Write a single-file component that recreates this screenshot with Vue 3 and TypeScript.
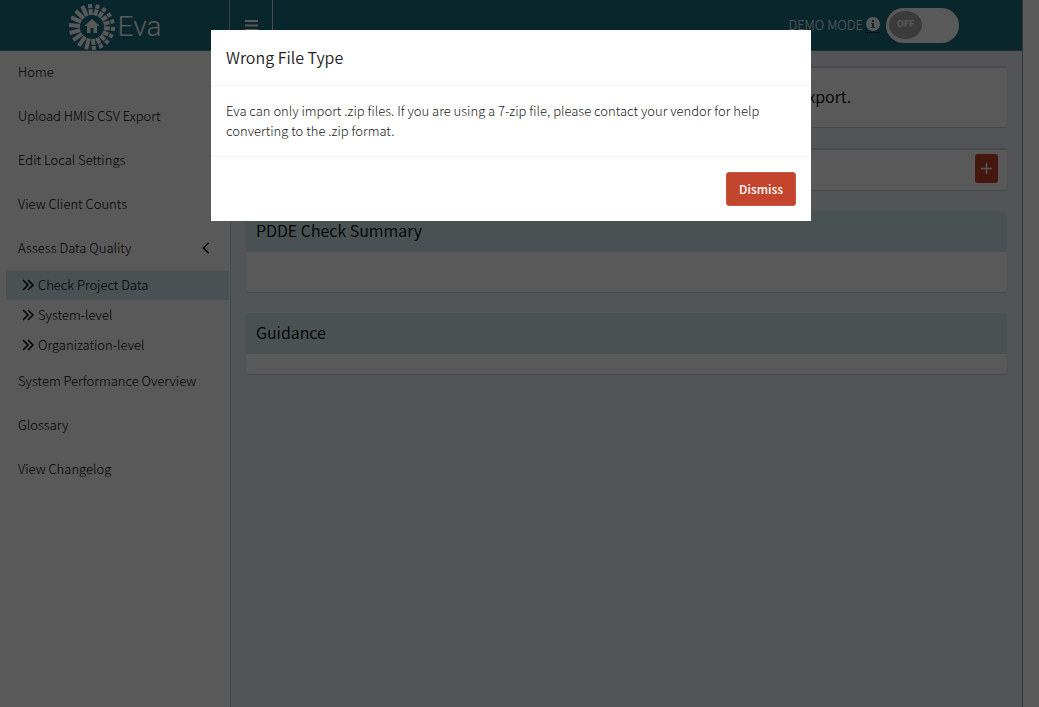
<script setup lang="ts">
import { ref } from 'vue'

interface NavItem {
  label: string
  children?: string[]
}

const nav: NavItem[] = [
  { label: 'Home' },
  { label: 'Upload HMIS CSV Export' },
  { label: 'Edit Local Settings' },
  { label: 'View Client Counts' },
  { label: 'Assess Data Quality', children: ['Check Project Data', 'System-level', 'Organization-level'] },
  { label: 'System Performance Overview' },
  { label: 'Glossary' },
  { label: 'View Changelog' },
]

const active = ref('Check Project Data')
const demoMode = ref(false)
const dialogOpen = ref(true)

const solidRays = [195, 215, 235, 255, 275, 295, 315, 335]
const splitRays = [-5, 15, 35, 55, 75, 95, 115, 135, 155, 175]
</script>

<template>
  <div class="page">
    <div class="shell">
      <header class="topbar">
        <a class="brand" href="#" aria-label="Eva">
          <svg class="logo" viewBox="-24 -24 48 48" aria-hidden="true">
            <rect v-for="a in solidRays" :key="a" x="-2" y="-23" width="4" height="11" :transform="`rotate(${a})`" />
            <g v-for="a in splitRays" :key="'s' + a" :transform="`rotate(${a})`">
              <rect x="-2" y="-23" width="4" height="4" />
              <rect x="-2" y="-18" width="4" height="6" />
            </g>
            <path d="M0-8 7.5-1H5V6H1.5V1H-1.5V6H-5V-1H-7.5Z" />
          </svg>
          <span>Eva</span>
        </a>
        <button class="burger" type="button" aria-label="Toggle navigation">
          <svg viewBox="0 0 13 11" aria-hidden="true"><path d="M0 0h13v2H0zM0 4.5h13v2H0zM0 9h13v2H0z" /></svg>
        </button>
        <div class="demo">
          <label for="demo">DEMO MODE</label>
          <span class="info">
            <svg viewBox="0 0 14 14" aria-hidden="true">
              <circle cx="7" cy="7" r="7" />
              <path class="mark" d="M6 3h2v2H6zM5 6h3v4h1v1H5v-1h1V7H5z" />
            </svg>
          </span>
          <span class="switch">
            <input id="demo" v-model="demoMode" type="checkbox" />
            <span class="knob">{{ demoMode ? 'ON' : 'OFF' }}</span>
          </span>
        </div>
      </header>

      <div class="columns">
        <nav class="sidebar">
          <ul>
            <li v-for="item in nav" :key="item.label">
              <a class="item" href="#">
                <span>{{ item.label }}</span>
                <svg v-if="item.children" class="caret" viewBox="0 0 8 12" aria-hidden="true"><path d="M6.5 1 1.5 6l5 5" /></svg>
              </a>
              <ul v-if="item.children" class="sub">
                <li v-for="child in item.children" :key="child">
                  <a class="subitem" :class="{ active: child === active }" href="#" @click.prevent="active = child">
                    <svg class="chevrons" viewBox="0 0 12 12" aria-hidden="true"><path d="M1 1l5 5-5 5M6 1l5 5-5 5" /></svg>
                    <span>{{ child }}</span>
                  </a>
                </li>
              </ul>
            </li>
          </ul>
        </nav>

        <main class="content">
          <section class="box notice">
            <p>Please upload your hashed HMIS CSV files to view this export.</p>
          </section>
          <section class="box collapsed">
            <button class="expand" type="button" aria-label="Expand">
              <svg viewBox="0 0 11 11" aria-hidden="true"><path d="M5.5 0v11M0 5.5h11" /></svg>
            </button>
          </section>
          <section class="box titled">
            <h3>PDDE Check Summary</h3>
            <div class="body tall"></div>
          </section>
          <section class="box titled">
            <h3>Guidance</h3>
            <div class="body"></div>
          </section>
        </main>
      </div>
    </div>

    <div v-if="dialogOpen" class="backdrop">
      <div class="dialog" role="dialog" aria-modal="true" aria-labelledby="dialog-title">
        <h4 id="dialog-title">Wrong File Type</h4>
        <p>
          Eva can only import .zip files. If you are using a 7-zip file, please contact your vendor for help
          converting to the .zip format.
        </p>
        <footer>
          <button class="dismiss" type="button" @click="dialogOpen = false">Dismiss</button>
        </footer>
      </div>
    </div>
  </div>
</template>

<style>
body {
  margin: 0;
  background: #fff;
}
</style>

<style scoped>
* {
  box-sizing: border-box;
}
.page {
  min-height: 100vh;
  padding-right: 16px;
  font-family: "Noto Sans CJK SC", "Noto Sans", sans-serif;
  font-size: 13px;
  font-weight: 300;
  line-height: 20px;
  color: #000;
}
.shell {
  display: flex;
  flex-direction: column;
  min-height: 100vh;
  border-right: 1px solid #999;
}
ul {
  list-style: none;
  margin: 0;
  padding: 0;
}
a {
  color: inherit;
  text-decoration: none;
}
.topbar {
  display: flex;
  height: 51px;
  background: #1a6e80;
  border-bottom: 1px solid #5e8a96;
  color: #fff;
}
.brand {
  display: flex;
  align-items: center;
  justify-content: center;
  gap: 2px;
  width: 230px;
  padding-top: 3px;
  border-right: 1px solid #a9bfc5;
  font: 300 28px/50px Roboto, sans-serif;
}
.logo {
  width: 48px;
  height: 48px;
  fill: #fff;
}
.burger {
  display: flex;
  align-items: center;
  justify-content: center;
  width: 43px;
  padding: 0;
  border: 0;
  border-right: 1px solid #d5e0e3;
  background: none;
}
.burger svg {
  width: 13px;
  height: 11px;
  fill: #fff;
}
.demo {
  display: flex;
  align-items: center;
  gap: 3px;
  margin-left: auto;
  padding-right: 63px;
}
.info {
  display: flex;
  padding-bottom: 1px;
  border-bottom: 1px dotted #000;
}
.info svg {
  width: 14px;
  height: 14px;
  fill: #fff;
}
.info .mark {
  fill: #1a6e80;
}
.switch {
  position: relative;
  margin-left: 3px;
  width: 73px;
  height: 35px;
  padding: 3px;
  border-radius: 18px;
  background: #fff;
}
.switch input {
  position: absolute;
  inset: 0;
  width: 100%;
  height: 100%;
  margin: 0;
  opacity: 0;
}
.knob {
  display: block;
  width: 33px;
  height: 28px;
  border-radius: 50%;
  background: #aaa;
  color: #fff;
  font-size: 9px;
  font-weight: 700;
  line-height: 26px;
  text-align: center;
}
.columns {
  display: flex;
  flex: 1;
}
.sidebar {
  width: 231px;
  border-right: 1px solid #d2d6de;
}
.item {
  display: flex;
  align-items: center;
  justify-content: space-between;
  height: 44px;
  padding: 0 20px 2px 18px;
}
.caret {
  width: 8px;
  height: 12px;
}
.caret,
.chevrons,
.expand svg {
  fill: none;
  stroke: currentColor;
  stroke-width: 1.5;
}
.sub {
  display: grid;
  gap: 1px;
  padding: 0 1px 0 6px;
}
.subitem {
  display: flex;
  align-items: center;
  gap: 4px;
  height: 29px;
  padding: 0 0 2px 16px;
}
.subitem.active {
  background: #d0e7ea;
}
.chevrons {
  width: 12px;
  height: 12px;
}
.content {
  flex: 1;
  display: flex;
  flex-direction: column;
  gap: 21px;
  padding: 15px;
  background: #ecf0f5;
}
.box {
  border-radius: 3px;
  background: #fff;
  box-shadow: 0 1px 1px rgba(0, 0, 0, 0.15);
}
.notice {
  padding: 17px 10px 19px;
  border-top: 2px solid #d2d6de;
  font-size: 16px;
  font-weight: 350;
  line-height: 23px;
  text-align: center;
}
.notice p {
  margin: 0;
}
.collapsed {
  display: flex;
  justify-content: flex-end;
  padding: 4px 9px 7px;
  border-top: 2px solid #d2d6de;
}
.expand {
  display: flex;
  align-items: center;
  justify-content: center;
  width: 23px;
  height: 29px;
  padding: 0;
  border: 0;
  border-radius: 3px;
  background: #c4452d;
  color: #fff;
}
.expand svg {
  width: 11px;
  height: 11px;
}
h3 {
  margin: 0;
  padding: 7px 10px 9px;
  border-radius: 3px 3px 0 0;
  background: #d0e7ea;
  font-size: 16px;
  font-weight: 350;
  line-height: 25px;
}
.body {
  padding: 10px;
}
.tall {
  padding: 20px;
}
.backdrop {
  position: fixed;
  inset: 0;
  padding: 30px 17px 30px 0;
  background: rgba(0, 0, 0, 0.65);
}
.dialog {
  max-width: 600px;
  margin: 0 auto;
  background: #fff;
  color: #222;
}
h4 {
  margin: 0;
  padding: 15px;
  border-bottom: 1px solid #f4f4f4;
  font-size: 16px;
  font-weight: 350;
  line-height: 25px;
}
.dialog p {
  margin: 0;
  padding: 15px;
}
.dialog footer {
  display: flex;
  justify-content: flex-end;
  padding: 15px;
  border-top: 1px solid #f4f4f4;
}
.dismiss {
  height: 34px;
  padding: 0 12px;
  border: 1px solid #c9563f;
  border-radius: 3px;
  background: #c4452d;
  color: #fff;
  font: inherit;
  font-size: 12px;
  font-weight: 500;
}
</style>
